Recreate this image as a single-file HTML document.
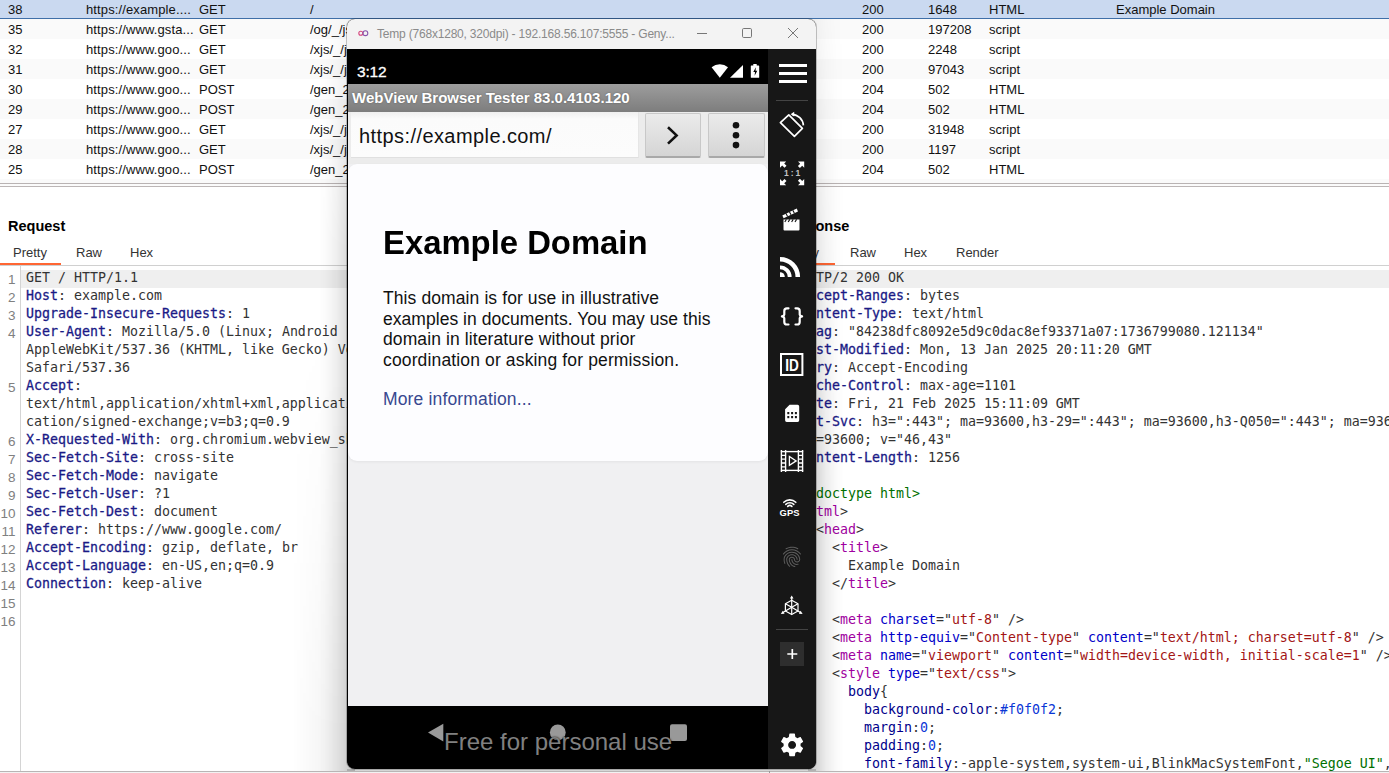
<!DOCTYPE html>
<html><head><meta charset="utf-8">
<style>
html,body{margin:0;padding:0;}
body{width:1389px;height:773px;overflow:hidden;background:#fff;position:relative;font-family:"Liberation Sans",sans-serif;color:#000;}
.abs{position:absolute;}
/* table */
.row{position:absolute;left:0;width:1389px;height:20px;font-size:13px;line-height:21px;white-space:nowrap;color:#111;}
.row span{position:absolute;top:0;}
.row.alt{background:#fafafa;}
.row.sel{background:#cad9f0;height:18px;line-height:19px;border-bottom:1px solid #3f6fa8;}
.c1{left:8px}.c2{left:86px;letter-spacing:.12px}.c3{left:199px}.c4{left:310px}.c5{left:862px}.c6{left:928px}.c7{left:989px}.c8{left:1116px}
/* code */
.code{position:absolute;font-family:"DejaVu Sans Mono","Liberation Mono",monospace;font-size:13.29px;line-height:18px;white-space:pre;color:#333;}
.ln{position:absolute;font-family:"Liberation Sans",sans-serif;font-size:13.5px;line-height:18px;white-space:pre;color:#808080;text-align:right;width:15.5px;left:0;}
.h{color:#1a1a86;-webkit-text-stroke:.28px #1a1a86;}
.t{color:#a000a0;}.a{color:#0000c8;}.v{color:#a31515;}.g{color:#007000;}.n{color:#0a36d6;}.k{color:#00008b;}
.tab{position:absolute;font-size:13px;color:#333;top:245px;line-height:16px;}
</style></head><body>

<!-- TABLE -->
<div class="row sel" style="top:0"><span class="c1">38</span><span class="c2">https://example....</span><span class="c3">GET</span><span class="c4">/</span><span class="c5">200</span><span class="c6">1648</span><span class="c7">HTML</span><span class="c8">Example Domain</span></div>
<div class="row alt" style="top:19px"><span class="c1">35</span><span class="c2">https://www.gsta...</span><span class="c3">GET</span><span class="c4">/og/_/js/k=og.qtm.en_US</span><span class="c5">200</span><span class="c6">197208</span><span class="c7">script</span></div>
<div class="row" style="top:39px"><span class="c1">32</span><span class="c2">https://www.goo...</span><span class="c3">GET</span><span class="c4">/xjs/_/js/k=xjs.s.en_US</span><span class="c5">200</span><span class="c6">2248</span><span class="c7">script</span></div>
<div class="row alt" style="top:59px"><span class="c1">31</span><span class="c2">https://www.goo...</span><span class="c3">GET</span><span class="c4">/xjs/_/js/k=xjs.s.en_US</span><span class="c5">200</span><span class="c6">97043</span><span class="c7">script</span></div>
<div class="row" style="top:79px"><span class="c1">30</span><span class="c2">https://www.goo...</span><span class="c3">POST</span><span class="c4">/gen_204?atyp=csi</span><span class="c5">204</span><span class="c6">502</span><span class="c7">HTML</span></div>
<div class="row alt" style="top:99px"><span class="c1">29</span><span class="c2">https://www.goo...</span><span class="c3">POST</span><span class="c4">/gen_204?atyp=csi</span><span class="c5">204</span><span class="c6">502</span><span class="c7">HTML</span></div>
<div class="row" style="top:119px"><span class="c1">27</span><span class="c2">https://www.goo...</span><span class="c3">GET</span><span class="c4">/xjs/_/js/k=xjs.s.en_US</span><span class="c5">200</span><span class="c6">31948</span><span class="c7">script</span></div>
<div class="row alt" style="top:139px"><span class="c1">28</span><span class="c2">https://www.goo...</span><span class="c3">GET</span><span class="c4">/xjs/_/js/k=xjs.s.en_US</span><span class="c5">200</span><span class="c6">1197</span><span class="c7">script</span></div>
<div class="row" style="top:159px"><span class="c1">25</span><span class="c2">https://www.goo...</span><span class="c3">POST</span><span class="c4">/gen_204?atyp=csi</span><span class="c5">204</span><span class="c6">502</span><span class="c7">HTML</span></div>
<div class="abs" style="left:0;top:179px;width:1389px;height:4px;background:#fafafa"></div>
<!-- splitter -->
<div class="abs" style="left:0;top:183px;width:1389px;height:4px;background:#fbfbfb;border-top:1px solid #b9b3b3;border-bottom:1px solid #bcb6b6;box-sizing:border-box"></div>

<!-- REQUEST PANEL -->
<div class="abs" style="left:8px;top:217px;font-weight:bold;font-size:14.5px;line-height:18px;">Request</div>
<div class="tab" style="left:13px">Pretty</div>
<div class="tab" style="left:76px">Raw</div>
<div class="tab" style="left:130px">Hex</div>
<div class="abs" style="left:0;top:265px;width:1389px;height:1px;background:#d0d0d0"></div>
<div class="abs" style="left:0;top:263px;width:61px;height:2px;background:#ff6633"></div>
<div class="abs" style="left:20px;top:266px;width:1px;height:507px;background:#d4d4d4"></div>
<div class="abs" style="left:21px;top:270px;width:760px;height:17.5px;background:#efefef"></div>
<div class="ln" style="top:271px">1
2
3
4


5


6
7
8
9
10
11
12
13
14
15
16</div>
<div class="code" style="left:26px;top:269px">GET / HTTP/1.1
<span class="h">Host</span>: example.com
<span class="h">Upgrade-Insecure-Requests</span>: 1
<span class="h">User-Agent</span>: Mozilla/5.0 (Linux; Android 11; Temp Build/RQ1A.210105.003; wv)
AppleWebKit/537.36 (KHTML, like Gecko) Version/4.0 Chrome/83.0.4103.120
Safari/537.36
<span class="h">Accept</span>:
text/html,application/xhtml+xml,application/xml;q=0.9,image/webp,image/apng,*/*;q=0.8,appli
cation/signed-exchange;v=b3;q=0.9
<span class="h">X-Requested-With</span>: org.chromium.webview_shell
<span class="h">Sec-Fetch-Site</span>: cross-site
<span class="h">Sec-Fetch-Mode</span>: navigate
<span class="h">Sec-Fetch-User</span>: ?1
<span class="h">Sec-Fetch-Dest</span>: document
<span class="h">Referer</span>: https://www.google.com/
<span class="h">Accept-Encoding</span>: gzip, deflate, br
<span class="h">Accept-Language</span>: en-US,en;q=0.9
<span class="h">Connection</span>: keep-alive
</div>

<!-- RESPONSE PANEL -->
<div class="abs" style="left:780px;top:217px;font-weight:bold;font-size:14.5px;line-height:18px;">Response</div>
<div class="tab" style="left:785px">Pretty</div>
<div class="tab" style="left:850px">Raw</div>
<div class="tab" style="left:904px">Hex</div>
<div class="tab" style="left:956px">Render</div>
<div class="abs" style="left:774px;top:263px;width:61px;height:2px;background:#ff6633"></div>
<div class="abs" style="left:795px;top:270px;width:600px;height:17.5px;background:#efefef"></div>
<div class="code" style="left:800px;top:269px">HTTP/2 200 OK
<span class="h">Accept-Ranges</span>: bytes
<span class="h">Content-Type</span>: text/html
<span class="h">Etag</span>: "84238dfc8092e5d9c0dac8ef93371a07:1736799080.121134"
<span class="h">Last-Modified</span>: Mon, 13 Jan 2025 20:11:20 GMT
<span class="h">Vary</span>: Accept-Encoding
<span class="h">Cache-Control</span>: max-age=1101
<span class="h">Date</span>: Fri, 21 Feb 2025 15:11:09 GMT
<span class="h">Alt-Svc</span>: h3=":443"; ma=93600,h3-29=":443"; ma=93600,h3-Q050=":443"; ma=93600,quic=":443";
ma=93600; v="46,43"
<span class="h">Content-Length</span>: 1256

<span class="g">&lt;!doctype html&gt;</span>
&lt;<span class="t">html</span>&gt;
  &lt;<span class="t">head</span>&gt;
    &lt;<span class="t">title</span>&gt;
      Example Domain
    &lt;/<span class="t">title</span>&gt;

    &lt;<span class="t">meta</span> <span class="a">charset</span>="<span class="v">utf-8</span>" /&gt;
    &lt;<span class="t">meta</span> <span class="a">http-equiv</span>="<span class="v">Content-type</span>" <span class="a">content</span>="<span class="v">text/html; charset=utf-8</span>" /&gt;
    &lt;<span class="t">meta</span> <span class="a">name</span>="<span class="v">viewport</span>" <span class="a">content</span>="<span class="v">width=device-width, initial-scale=1</span>" /&gt;
    &lt;<span class="t">style</span> <span class="a">type</span>="<span class="v">text/css</span>"&gt;
      <span class="k">body</span>{
        <span class="k">background-color</span>:<span class="n">#f0f0f2</span>;
        <span class="k">margin</span>:<span class="n">0</span>;
        <span class="k">padding</span>:<span class="n">0</span>;
        <span class="k">font-family</span>:-apple-system,system-ui,BlinkMacSystemFont,<span class="g">"Segoe UI"</span>,<span class="g">"Open Sans"</span></div>
<div class="abs" style="left:0;top:771px;width:1389px;height:1px;background:#b9b5b5"></div><div class="abs" style="left:0;top:772px;width:1389px;height:1px;background:#f2f2f2"></div><div class="abs" style="left:769px;top:771px;width:1px;height:2px;background:#999"></div>

<!-- window shadow -->
<div class="abs" style="left:314px;top:19px;width:41px;height:752px;background:linear-gradient(to left,rgba(0,0,0,.14) 0,rgba(0,0,0,.14) 8px,rgba(0,0,0,.065) 18px,rgba(0,0,0,.02) 28px,rgba(0,0,0,0) 36px);-webkit-mask-image:linear-gradient(to bottom,rgba(0,0,0,.15) 0,rgba(0,0,0,.45) 60px,#000 230px);mask-image:linear-gradient(to bottom,rgba(0,0,0,.15) 0,rgba(0,0,0,.45) 60px,#000 230px)"></div>
<div class="abs" style="left:808px;top:19px;width:41px;height:752px;background:linear-gradient(to right,rgba(0,0,0,.17) 0,rgba(0,0,0,.17) 8px,rgba(0,0,0,.075) 18px,rgba(0,0,0,.02) 28px,rgba(0,0,0,0) 36px);-webkit-mask-image:linear-gradient(to bottom,rgba(0,0,0,.2) 0,rgba(0,0,0,.4) 100px,#000 480px);mask-image:linear-gradient(to bottom,rgba(0,0,0,.2) 0,rgba(0,0,0,.4) 100px,#000 480px)"></div>
<div class="abs" style="left:293px;top:330px;width:62px;height:441px;background:linear-gradient(to left,rgba(0,0,0,.05) 0,rgba(0,0,0,.05) 20px,rgba(0,0,0,.035) 36px,rgba(0,0,0,0) 62px);-webkit-mask-image:linear-gradient(to bottom,transparent 0,rgba(0,0,0,.4) 45%,#000 92%);mask-image:linear-gradient(to bottom,transparent 0,rgba(0,0,0,.4) 45%,#000 92%)"></div>
<div class="abs" style="left:347px;top:769px;width:469px;height:2px;background:rgba(0,0,0,.16)"></div>
<!-- EMULATOR WINDOW -->
<div id="win" class="abs" style="left:347px;top:19px;width:469px;height:750px;background:#000;border-radius:8px;overflow:hidden;box-shadow:0 0 0 1px rgba(0,0,0,.22);">
  <!-- title bar -->
  <div class="abs" style="left:0;top:0;width:469px;height:30px;background:#f3f3f3"></div>
  <svg class="abs" style="left:10px;top:8px" width="14" height="12" viewBox="0 0 14 12"><circle cx="3.800" cy="6.200" r="2" fill="none" stroke="#d6457c" stroke-width="1.100"/><circle cx="8.400" cy="6.200" r="2.400" fill="none" stroke="#8a55ad" stroke-width="1.100"/></svg>
  <div id="wtitle" class="abs" style="left:30px;top:6.8px;font-size:12px;line-height:16px;color:#8a8a8a;white-space:nowrap;letter-spacing:-.2px">Temp (768x1280, 320dpi) - 192.168.56.107:5555 - Geny...</div>
  <svg class="abs" style="left:345px;top:4px" width="120" height="22" viewBox="0 0 120 22" fill="none" stroke="#777" stroke-width="1"><path d="M5 10.5h10"/><rect x="50.5" y="5.5" width="9" height="9" rx="1.2"/><path d="M96 5l10 10M106 5l-10 10"/></svg>

  <!-- phone screen -->
  <div id="phone" class="abs" style="left:1px;top:30px;width:420px;height:720px;background:#f0f0f2;overflow:hidden;font-family:'Liberation Sans',sans-serif">
    <!-- status bar -->
    <div class="abs" style="left:0;top:0;width:420px;height:35px;background:#000"></div>
    <div class="abs" style="left:9px;top:14px;font-size:15.5px;line-height:18px;color:#fff;-webkit-text-stroke:.3px #fff;letter-spacing:-.2px">3:12</div>
    <svg class="abs" style="left:360px;top:13px" width="56" height="18" viewBox="0 0 56 18"><path d="M3.6 5.2 A12.5 12.5 0 0 1 20 5.2 L11.8 15.8z" fill="#fff"/><path d="M22 15.8H35V2.9z" fill="#fff"/><path d="M45.3 2h3.4v1.4h1.9a.6.6 0 0 1 .6.6v11.2a.6.6 0 0 1-.6.6h-7.2a.6.6 0 0 1-.6-.6V4a.6.6 0 0 1 .6-.6h1.9z" fill="#fff"/><path d="M47.9 5.2l-2.6 4.9h1.7l-.4 3.6 2.7-5h-1.8z" fill="#000"/></svg>
    <!-- app bar -->
    <div class="abs" style="left:0;top:35px;width:420px;height:28px;background:linear-gradient(#9d9d9d,#7d7d7d)"></div>
    <div id="apptitle" class="abs" style="left:4px;top:39px;font-size:15px;font-weight:bold;line-height:20px;color:#fff;white-space:nowrap;text-shadow:0 0 2px rgba(0,0,0,.35)">WebView Browser Tester 83.0.4103.120</div>
    <!-- url bar -->
    <div class="abs" style="left:0;top:63px;width:420px;height:52px;background:#ececec"></div>
    <div class="abs" style="left:3px;top:63px;width:288px;height:46px;background:linear-gradient(#f0f0f0,#fbfbfb 16%,#fcfcfc);border-bottom:1px solid #e0e0e0;border-right:1px solid #e6e6e6;box-sizing:border-box"></div>
    <div id="url" class="abs" style="left:11px;top:74px;font-size:20px;line-height:26px;color:#111;white-space:nowrap;letter-spacing:.42px">https://example.com/</div>
    <div class="abs" style="left:297px;top:64px;width:56px;height:45px;box-sizing:border-box;background:linear-gradient(#ebebeb,#d5d5d5);border:1px solid #c8c8c8;border-bottom:2px solid #a9a9a9;border-radius:2px"></div>
    <div class="abs" style="left:360px;top:64px;width:57px;height:45px;box-sizing:border-box;background:linear-gradient(#ebebeb,#d5d5d5);border:1px solid #c8c8c8;border-bottom:2px solid #a9a9a9;border-radius:2px"></div>
    <svg class="abs" style="left:297px;top:65px" width="120" height="44" viewBox="0 0 120 44"><path d="M23 13.2L31.6 21.4 23 29.6" fill="none" stroke="#111" stroke-width="2.6"/><circle cx="91" cy="11.3" r="3.3" fill="#111"/><circle cx="91" cy="21.2" r="3.3" fill="#111"/><circle cx="91" cy="31.1" r="3.3" fill="#111"/></svg>
    <!-- web content -->
    <div class="abs" style="left:0;top:115px;width:420px;height:297px;background:#fdfdff;border-radius:9px;box-shadow:0 1px 3px rgba(0,0,0,.06)"></div>
    <div id="h1" class="abs" style="left:35px;top:173.5px;font-size:33.5px;font-weight:bold;line-height:40px;color:#000;white-space:nowrap;transform:scaleX(.98);transform-origin:0 0">Example Domain</div>
    <div id="para" class="abs" style="left:35px;top:238.6px;font-size:17.5px;line-height:20.6px;letter-spacing:.1px;color:#111;white-space:nowrap"><div class="abs" style="top:0">This domain is for use in illustrative</div><div class="abs" style="top:21px;letter-spacing:.04px">examples in documents. You may use this</div><div class="abs" style="top:41px">domain in literature without prior</div><div class="abs" style="top:62px;letter-spacing:.14px">coordination or asking for permission.</div></div>
    <div id="more" class="abs" style="left:35px;top:339.6px;font-size:17.5px;line-height:20.6px;letter-spacing:.15px;color:#38488f;white-space:nowrap">More information...</div>
    <!-- nav bar -->
    <div class="abs" style="left:0;top:657px;width:420px;height:63px;background:#000"></div>
    <svg class="abs" style="left:70px;top:670px" width="290" height="30" viewBox="0 0 290 30"><path d="M10 13.600L25.300 4.800V22.400z" fill="#999"/><circle cx="139.800" cy="13.400" r="7.900" fill="#999"/><rect x="252" y="5.200" width="17" height="16.800" rx="2" fill="#999"/></svg>
    <div id="free" class="abs" style="left:96px;top:678px;font-size:24px;line-height:30px;color:#808080;white-space:nowrap;text-shadow:0 0 2px #000">Free for personal use</div>
  </div>

  <!-- sidebar -->
  <div id="side" class="abs" style="left:421px;top:30px;width:48px;height:720px;background:#171717">
  <svg class="abs" style="left:0;top:0" width="48" height="720" viewBox="768 49 48 720">
    <g fill="#fff"><rect x="779" y="64" width="28" height="3"/><rect x="779" y="72" width="28" height="3"/><rect x="779" y="80" width="28" height="3"/></g>
    <rect x="776" y="100" width="32" height="1" fill="#444"/>
    <rect x="776" y="629" width="32" height="1" fill="#444"/>
    <!-- rotate -->
    <g fill="none" stroke="#fff" stroke-width="1.7"><path d="M780.4 122.6L788.8 114.8 802.4 128.4 794.4 136.4z" stroke-linejoin="round"/><path d="M792 114.3A12 12 0 0 1 803.4 125.4"/></g><path d="M790.6 114.2l3.6-2.4v4.8z" fill="#fff"/>
    <!-- 1:1 -->
    <g fill="#fff"><path d="M780 161.500h6.200l-2 2 2.300 2.300-2 2-2.300-2.300-2.200 2.200z"/><path d="M804.200 161.500v6.200l-2-2-2.300 2.300-2-2 2.300-2.300-2.200-2.200z"/><path d="M780 185.200h6.200l-2-2 2.300-2.300-2-2-2.300 2.300-2.200-2.200z"/><path d="M804.200 185.200v-6.200l-2 2-2.300-2.300-2 2 2.300 2.300-2.200 2.200z"/></g>
    <text x="792.200" y="176.400" font-family="Liberation Sans, sans-serif" font-size="8.500" font-weight="bold" fill="#c4c4c4" text-anchor="middle" word-spacing="-0.4">1 : 1</text>
    <!-- clapper -->
    <g fill="#fff"><path d="M783.5 219.5h16v10a1 1 0 0 1-1 1h-14a1 1 0 0 1-1-1z"/><path d="M782.3 215.4L796.7 208.6 798 211.4 783.6 218.2z"/></g>
    <g stroke="#171717" stroke-width="1.1"><path d="M786.4 219.4l-1.6 2.6M789.8 219.4l-1.6 2.6M793.2 219.4l-1.6 2.6M796.6 219.4l-1.6 2.6"/><path d="M786 213.4l1.6 3M789.4 211.8l1.6 3M792.8 210.2l1.6 3"/></g>
    <!-- rss -->
    <g fill="none" stroke="#fff"><path d="M780 259.2A17.8 17.8 0 0 1 797.8 277" stroke-width="4.6"/><path d="M780 267.3A9.7 9.7 0 0 1 789.7 277" stroke-width="3.8"/></g><path d="M780 272.2A4.8 4.8 0 0 1 784.8 277H780z" fill="#fff"/>
    <!-- braces -->
    <g fill="none" stroke="#fff" stroke-width="2.2" stroke-linecap="round" stroke-linejoin="round"><path d="M788.5 308.3h-1.6a2.6 2.6 0 0 0-2.6 2.6v2.6a2.4 2.4 0 0 1-2.4 2.9 2.4 2.4 0 0 1 2.4 2.9v2.6a2.6 2.6 0 0 0 2.6 2.6h1.6"/><path d="M795.5 308.3h1.6a2.6 2.6 0 0 1 2.6 2.6v2.6a2.4 2.4 0 0 0 2.4 2.9 2.4 2.4 0 0 0-2.4 2.9v2.6a2.6 2.6 0 0 1-2.6 2.6h-1.6"/></g>
    <!-- ID -->
    <rect x="781" y="354" width="21.4" height="21" fill="none" stroke="#fff" stroke-width="2"/>
    <text x="792.1" y="370.8" font-family="Liberation Sans, sans-serif" font-size="16.2" font-weight="bold" fill="#fff" text-anchor="middle" textLength="13.6" lengthAdjust="spacingAndGlyphs">ID</text>
    <!-- SIM -->
    <path d="M789.6 404.8h8a1.6 1.6 0 0 1 1.6 1.6v13.9a1.6 1.6 0 0 1-1.6 1.6h-10.9a1.6 1.6 0 0 1-1.6-1.6v-11z" fill="#fff"/>
    <g fill="#171717"><rect x="787.3" y="412" width="2" height="2.2"/><rect x="791.1" y="412" width="2" height="2.2"/><rect x="794.9" y="412" width="2" height="2.2"/><rect x="787.3" y="416" width="2" height="2.2"/><rect x="791.1" y="416" width="2" height="2.2"/><rect x="794.9" y="416" width="2" height="2.2"/></g>
    <!-- film -->
    <g fill="none" stroke="#fff" stroke-width="1.4"><rect x="781.4" y="451.6" width="21.2" height="18.8"/><path d="M785.6 450v22M798.4 450v22"/><path d="M789.4 456.4v9l6.800-4.500z" stroke-width="1.300"/></g>
    <g stroke="#fff" stroke-width="1.3"><path d="M781.4 455.4h4.2M781.4 459.2h4.2M781.4 463h4.2M781.4 466.8h4.2M798.4 455.4h4.2M798.4 459.2h4.2M798.4 463h4.2M798.4 466.8h4.2"/><path d="M781.4 450v1.6M802.6 450v1.6M781.4 470.4v1.6M802.6 470.4v1.6" stroke-width="1.4"/></g>
    <!-- GPS -->
    <g fill="none" stroke="#fff" stroke-width="1.6" stroke-linecap="round"><path d="M783.8 502.3a8.6 8.6 0 0 1 12 0"/><path d="M785.8 504.4a5.8 5.8 0 0 1 8 0"/><path d="M787.7 506.4a3 3 0 0 1 4.2 0"/></g>
    <text x="789.5" y="516.4" font-family="Liberation Sans, sans-serif" font-size="9.4" font-weight="bold" fill="#fff" text-anchor="middle">GPS</text>
    <!-- fingerprint -->
    <g transform="translate(779.8 544.8) scale(1.01)"><path fill="#5e5e5e" d="M17.81 4.47c-.08 0-.16-.02-.23-.06C15.66 3.42 14 3 12.01 3c-1.980 0-3.860.47-5.570 1.410-.240.130-.540.040-.680-.2-.130-.240-.040-.550.2-.680C7.820 2.520 9.860 2 12.010 2c2.130 0 3.990.470 6.030 1.520.250.130.340.430.210.670-.090.180-.260.280-.440.280zM3.500 9.720c-.1 0-.2-.030-.290-.090-.230-.160-.280-.470-.120-.7.990-1.400 2.250-2.500 3.750-3.270C9.980 4.040 14 4.030 17.150 5.650c1.500.770 2.760 1.860 3.750 3.250.160.220.110.540-.120.7-.230.160-.540.110-.7-.120-.9-1.260-2.040-2.250-3.390-2.940-2.870-1.470-6.540-1.470-9.400.010-1.360.7-2.500 1.700-3.400 2.960-.080.140-.230.210-.390.210zm6.250 12.070c-.130 0-.260-.050-.350-.150-.870-.870-1.340-1.430-2.010-2.640-.690-1.230-1.050-2.730-1.050-4.340 0-2.970 2.540-5.390 5.660-5.390s5.660 2.420 5.660 5.390c0 .280-.220.5-.5.5s-.5-.220-.5-.5c0-2.420-2.090-4.390-4.660-4.390-2.570 0-4.660 1.970-4.660 4.390 0 1.440.320 2.770.930 3.850.640 1.150 1.080 1.640 1.850 2.420.190.2.190.510 0 .710-.110.1-.240.150-.370.150zm7.170-1.850c-1.190 0-2.240-.3-3.100-.890-1.490-1.010-2.380-2.650-2.380-4.390 0-.280.220-.5.5-.5s.5.220.5.5c0 1.410.720 2.740 1.940 3.560.710.480 1.540.710 2.540.710.240 0 .640-.030 1.040-.1.270-.050.530.130.580.410.050.270-.130.530-.410.580-.570.110-1.070.120-1.210.120zM14.910 22c-.040 0-.090-.010-.130-.020-1.590-.440-2.630-1.030-3.720-2.100-1.400-1.390-2.170-3.240-2.170-5.220 0-1.620 1.380-2.940 3.080-2.940 1.700 0 3.080 1.320 3.080 2.940 0 1.070.930 1.940 2.080 1.940s2.080-.870 2.080-1.940c0-3.770-3.250-6.830-7.250-6.830-2.840 0-5.440 1.580-6.610 4.030-.390.810-.590 1.760-.590 2.800 0 .780.070 2.010.670 3.610.1.260-.030.550-.290.640-.260.1-.550-.040-.640-.290-.490-1.310-.730-2.610-.730-3.960 0-1.200.230-2.290.680-3.240 1.330-2.790 4.280-4.600 7.510-4.600 4.550 0 8.250 3.510 8.250 7.830 0 1.620-1.380 2.940-3.080 2.940s-3.080-1.320-3.080-2.940c0-1.070-.930-1.940-2.080-1.940s-2.080.870-2.080 1.940c0 1.710.660 3.310 1.870 4.510.950.940 1.860 1.460 3.270 1.850.270.070.420.350.350.610-.050.230-.260.380-.470.380z"/></g>
    <!-- 3D -->
    <g fill="none" stroke="#fff" stroke-width="1.2" stroke-linejoin="round"><path d="M791.700 600.300l6.300 3.400v7.400l-6.300 3.500-6.300-3.500v-7.400z"/><path d="M785.400 603.700l6.300 3.500 6.300-3.500M791.700 607.200v7.400"/><path d="M791.700 597.500v9.700M791.700 607.200l-9.200 5.600M791.700 607.200l9.200 5.600"/></g>
    <g fill="#fff"><path d="M791.700 595.400l1.800 3.200h-3.600z"/><path d="M780.800 614l2-3.200 1.800 3z"/><path d="M802.600 614l-2-3.200-1.800 3z"/></g>
    <!-- plus -->
    <rect x="780" y="642" width="24" height="24" fill="#2e2e2e"/>
    <path d="M792.300 649v10M787.300 654h10" stroke="#fff" stroke-width="1.7" fill="none"/>
    <!-- gear -->
    <g transform="translate(792.100 744.900) scale(0.96)"><path fill="#fff" d="M7.430 0.980c.04-.32.070-.64.070-.98s-.03-.66-.07-.98l2.110-1.650c.19-.15.240-.42.120-.64l-2-3.460c-.12-.22-.39-.30-.61-.22l-2.490 1c-.52-.40-1.080-.73-1.690-.98l-.38-2.650c-.03-.24-.24-.42-.49-.42h-4c-.25 0-.46.180-.49.420l-.38 2.650c-.61.250-1.170.59-1.690.98l-2.490-1c-.23-.09-.49 0-.61.220l-2 3.460c-.13.220-.07.490.12.640l2.110 1.650c-.04.320-.07.650-.07.980s.03.660.07.980l-2.110 1.650c-.19.150-.24.420-.12.640l2 3.460c.12.220.39.300.61.220l2.490-1c.52.400 1.080.73 1.690.98l.38 2.650c.03.240.24.420.49.420h4c.25 0 .46-.18.490-.42l.38-2.650c.61-.25 1.170-.59 1.690-.98l2.490 1c.23.090.49 0 .61-.22l2-3.460c.12-.22.070-.49-.12-.64l-2.110-1.650zM0 3.500c-1.930 0-3.500-1.570-3.500-3.500s1.570-3.500 3.500-3.500 3.500 1.570 3.500 3.500-1.570 3.500-3.500 3.500z" transform="scale(1.18)"/></g>
  </svg>
  </div>
</div>
</body></html>
